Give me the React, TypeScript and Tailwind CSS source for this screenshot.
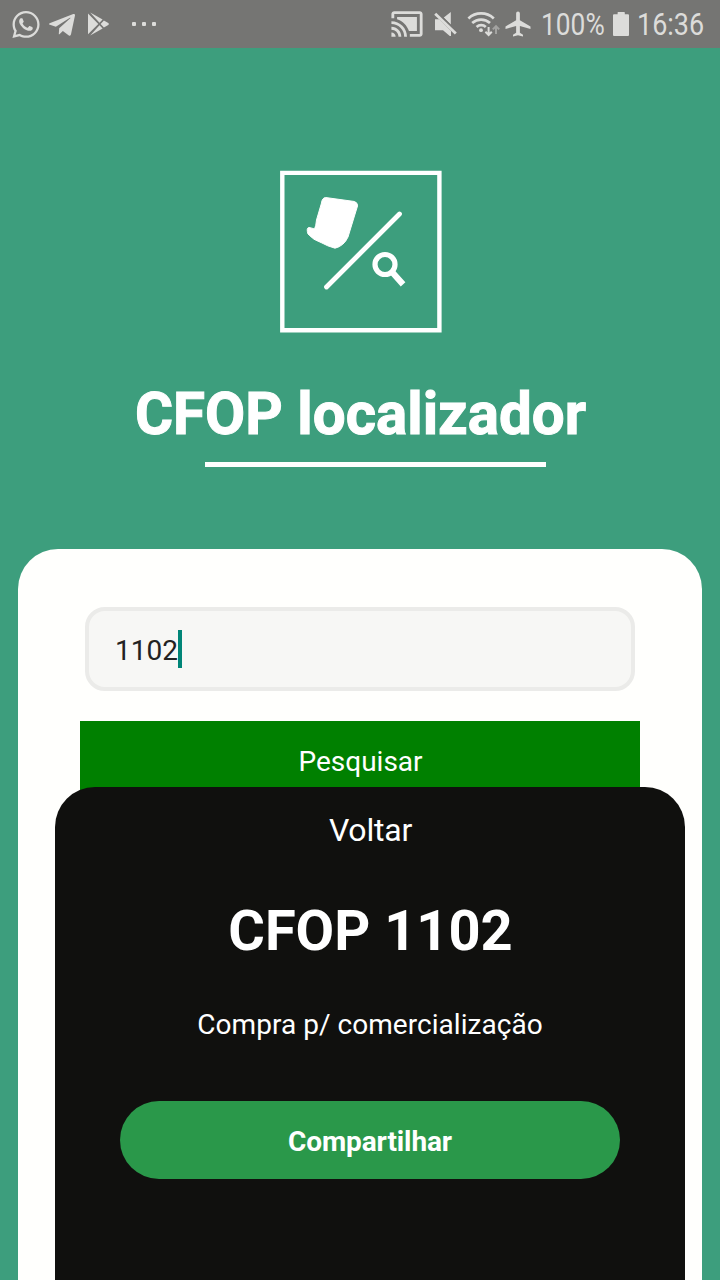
import { FaTelegramPlane, FaWhatsapp } from "react-icons/fa";
import { MdAirplanemodeActive, MdCastConnected } from "react-icons/md";

function PlayStore() {
  return (
    <svg className="ml-[12px] h-12 w-[23px] shrink-0" viewBox="87 0 23 48" fill="currentColor">
      <path d="M88 13.6L98.3 24 88 34.2zM90.2 12.6L102.6 19.6 99.5 22.8zM90.2 35.4L102.6 28.4 99.5 25.2zM100.6 24L103.9 20.5 108.3 23Q109.6 24 108.3 25L103.9 27.5z" />
    </svg>
  );
}

function MutedSpeaker() {
  return (
    <svg className="ml-2 h-12 w-7 shrink-0" viewBox="432 0 28 48" fill="currentColor">
      <path d="M450.8 12v12.4l-7-7zM435 19.2h5.6l10.4 10v6.8h-1.2l-6.8-5.7H435z" />
      <path d="M435.8 13l20.6 20.2" stroke="#757573" strokeWidth="4.2" />
      <path d="M435.2 13.7l20.6 19.8" stroke="currentColor" strokeWidth="2.8" />
    </svg>
  );
}

function Wifi() {
  return (
    <svg className="ml-[6px] h-12 w-[34px] shrink-0" viewBox="466 0 34 48" fill="none" stroke="currentColor" strokeWidth="2.7">
      <path d="M468.4 18.4a18.7 18.7 0 0 1 25.4 0M472.2 23a13.2 13.2 0 0 1 17.8 0M476.6 27a6.8 6.8 0 0 1 9.2 0" />
      <circle cx="481" cy="30.2" r="1.9" fill="currentColor" stroke="none" />
      <path d="M488.6 27v7.5M485.4 31.8l3.2 3.2 3.2-3.2" strokeWidth="2" />
      <path d="M496 34v-7M492.8 29.4l3.2-3.2 3.2 3.2" stroke="#a3a3a1" strokeWidth="2" />
    </svg>
  );
}

function Battery() {
  return (
    <svg className="h-12 w-4 shrink-0" viewBox="0 0 16 48" fill="currentColor">
      <path d="M1 14.2h3.6V12.6Q4.6 12 5.2 12h6q.6 0 .6.6v1.6H15q1 0 1 1V35q0 1-1 1H1q-1 0-1-1V15.2q0-1 1-1z" />
    </svg>
  );
}

function StatusBar() {
  return (
    <div className="flex h-12 shrink-0 items-center overflow-hidden bg-[#757573] text-[#dcdcda]">
      <FaWhatsapp className="ml-3 h-[31px] w-[28px] shrink-0" />
      <FaTelegramPlane className="mt-[2px] ml-[9px] h-[30px] w-[26px] shrink-0" />
      <PlayStore />
      <div className="ml-[22px] flex gap-[6px]">
        <span className="h-1 w-1 rounded-[1px] bg-current" />
        <span className="h-1 w-1 rounded-[1px] bg-current" />
        <span className="h-1 w-1 rounded-[1px] bg-current" />
      </div>
      <div className="ml-auto flex h-12 w-[330px] shrink-0 items-center">
        <MdCastConnected className="h-[34px] w-[34px] shrink-0" />
        <MutedSpeaker />
        <Wifi />
        <MdAirplanemodeActive className="ml-[3px] h-[30px] w-[30px] shrink-0" />
        <div className="ml-2 w-[72px] shrink-0">
          <span className="block w-max origin-left scale-x-[0.85] pt-[1px] text-[31px] leading-[48px]">100%</span>
        </div>
        <Battery />
        <div className="ml-2 w-[78px] shrink-0">
          <span className="block w-max origin-left scale-x-[0.87] pt-[1px] text-[31px] leading-[48px]">16:36</span>
        </div>
      </div>
    </div>
  );
}

function Logo() {
  return (
    <svg className="h-[163px] w-[163px] shrink-0" viewBox="0 0 163 163" fill="none" stroke="white">
      <path d="M3.3 2.9H160.4V160.2H3.3z" strokeWidth="4.4" />
      <path d="M47.5 117L120.5 44" strokeWidth="4.8" strokeLinecap="round" />
      <path
        d="M46.5 27.5L75.5 31.5Q79 33 78.5 36L69 67Q65 76 56 78.2Q48 76 43 73Q34 70 29 64Q27 58 30 57.5Q33 58 35.5 59Q37 56 37.5 50L42.5 33Q43 28 46.5 27.5z"
        fill="white"
        strokeWidth="1"
      />
      <circle cx="106" cy="94.5" r="10" strokeWidth="5.2" />
      <path d="M113.5 102.5L122 112" strokeWidth="6.2" strokeLinecap="square" />
    </svg>
  );
}

export default function App() {
  return (
    <div className="flex h-[1280px] w-[720px] flex-col overflow-hidden bg-[#3d9e7d] font-['Roboto','Noto_Sans',sans-serif]">
      <StatusBar />
      <header className="flex h-[501px] shrink-0 flex-col items-center pt-[122px]">
        <Logo />
        <h1 className="mt-[46px] h-[70px] pl-[1px] text-[58.3px] leading-[70px] font-bold whitespace-nowrap text-white [-webkit-text-stroke:1px_white]">
          CFOP localizador
        </h1>
        <div className="mt-[13px] ml-[30px] h-[5px] w-[341px] shrink-0 bg-white" />
      </header>
      <main className="mx-[18px] flex min-h-0 flex-1 flex-col rounded-t-[40px] bg-[#fffffd] pt-[58px]">
        <div className="mx-[67px] flex h-[84px] shrink-0 items-center rounded-[20px] border-4 border-[#ebebe9] bg-[#f7f7f5] pl-[26px]">
          <span className="pt-[3px] text-[28px] leading-8 text-[#222]">1102</span>
          <span className="h-[38px] w-1 bg-[#008577]" />
        </div>
        <button className="mx-[62px] mt-[30px] flex h-20 shrink-0 items-center justify-center bg-[#008000] pt-[2px] pl-[1px] text-[28px] text-white">
          Pesquisar
        </button>
        <section className="z-10 mr-[17px] -mt-[14px] ml-[37px] flex min-h-0 flex-1 flex-col items-center rounded-t-[40px] bg-[#10100e] text-white">
          <button className="mt-[23px] h-10 pl-[1px] text-[32px] leading-10 tracking-[-0.2px]">Voltar</button>
          <h2 className="mt-[46px] h-[70px] pl-[1px] text-[56px] leading-[70px] font-bold">CFOP 1102</h2>
          <p className="mt-[39px] h-10 text-[28px] leading-10 tracking-[0.04px]">Compra p/ comercialização</p>
          <button className="mt-[56px] h-[78px] w-[500px] shrink-0 rounded-[40px] bg-[#2a984a] pt-[4px] text-[28px] font-bold tracking-[-0.1px]">
            Compartilhar
          </button>
        </section>
      </main>
    </div>
  );
}
